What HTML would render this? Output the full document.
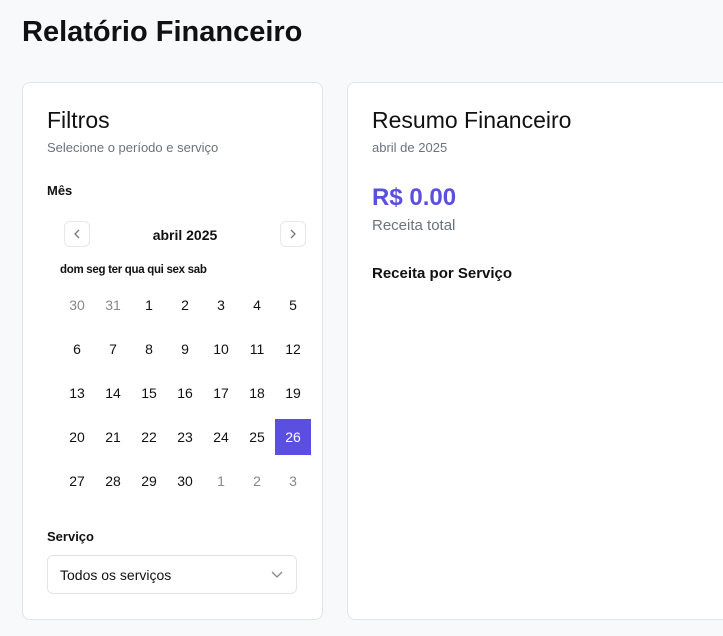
<!DOCTYPE html><html><head><style>
body{margin:0;width:723px;height:636px;background:#f8f9fb;font-family:"Liberation Sans",sans-serif;color:#111;overflow:hidden;position:relative}
.a{position:absolute}
.card{position:absolute;background:#fff;border:1px solid #e3e4e8;border-radius:8px;top:82px;height:536px}
.cell{position:absolute;width:36px;height:36px;line-height:36px;text-align:center;font-size:14px}
.nav{position:absolute;top:221px;width:26px;height:26px;border:1px solid #e5e7eb;border-radius:6px;box-sizing:border-box}
</style></head><body>
<div class="a" style="left:22px;top:16px;font-size:29px;font-weight:bold">Relatório Financeiro</div>
<div class="card" style="left:22px;width:299px"></div>
<div class="card" style="left:347px;width:400px"></div>
<div class="a" style="left:47px;top:107px;font-size:23px">Filtros</div>
<div class="a" style="left:47px;top:140px;font-size:13px;color:#6b7280">Selecione o período e serviço</div>
<div class="a" style="left:47px;top:183px;font-size:13px;font-weight:bold">Mês</div>
<div class="nav" style="left:64px"><svg width="24" height="24" style="position:absolute;left:0;top:0"><path d="M14 8l-4 4 4 4" fill="none" stroke="#777" stroke-width="1.3"/></svg></div>
<div class="nav" style="left:280px"><svg width="24" height="24" style="position:absolute;left:0;top:0"><path d="M10 8l4 4-4 4" fill="none" stroke="#777" stroke-width="1.3"/></svg></div>
<div class="a" style="left:60px;top:227px;width:250px;text-align:center;font-size:14px;font-weight:bold">abril 2025</div>
<div class="a" style="left:60px;top:264px;font-size:11.5px;font-weight:bold;letter-spacing:-0.3px">dom seg ter qua qui sex sab</div>
<div id="g"></div>
<div class="a" style="left:47px;top:529px;font-size:13px;font-weight:bold">Serviço</div>
<div class="a" style="left:47px;top:555px;width:250px;height:39px;border:1px solid #e3e4e8;border-radius:6px;box-sizing:border-box"></div>
<div class="a" style="left:60px;top:567px;font-size:14px">Todos os serviços</div>
<svg class="a" style="left:270px;top:568px" width="14" height="14"><path d="M2 4l5 5 5-5" fill="none" stroke="#888" stroke-width="1.3"/></svg>
<div class="a" style="left:372px;top:107px;font-size:23px">Resumo Financeiro</div>
<div class="a" style="left:372px;top:140px;font-size:13px;color:#6b7280">abril de 2025</div>
<div class="a" style="left:372px;top:184px;font-size:24px;font-weight:bold;color:#5b4fe0">R$ 0.00</div>
<div class="a" style="left:372px;top:217px;font-size:15px;color:#6b7280">Receita total</div>
<div class="a" style="left:372px;top:265px;font-size:15px;font-weight:bold">Receita por Serviço</div>
<script>
var d=[30,31];for(var i=1;i<=30;i++)d.push(i);d.push(1,2,3);var h='';
d.forEach(function(v,k){var r=Math.floor(k/7),c=k%7;var out=(k<2||k>31);var sel=(v==26&&!out);
h+='<div class="cell" style="left:'+(59+c*36)+'px;top:'+(287+r*44)+'px;'+(out?'color:#888;':'')+(sel?'background:#5b4fe0;color:#fff;':'')+'">'+v+'</div>';});
document.getElementById('g').innerHTML=h;
</script>
</body></html>
